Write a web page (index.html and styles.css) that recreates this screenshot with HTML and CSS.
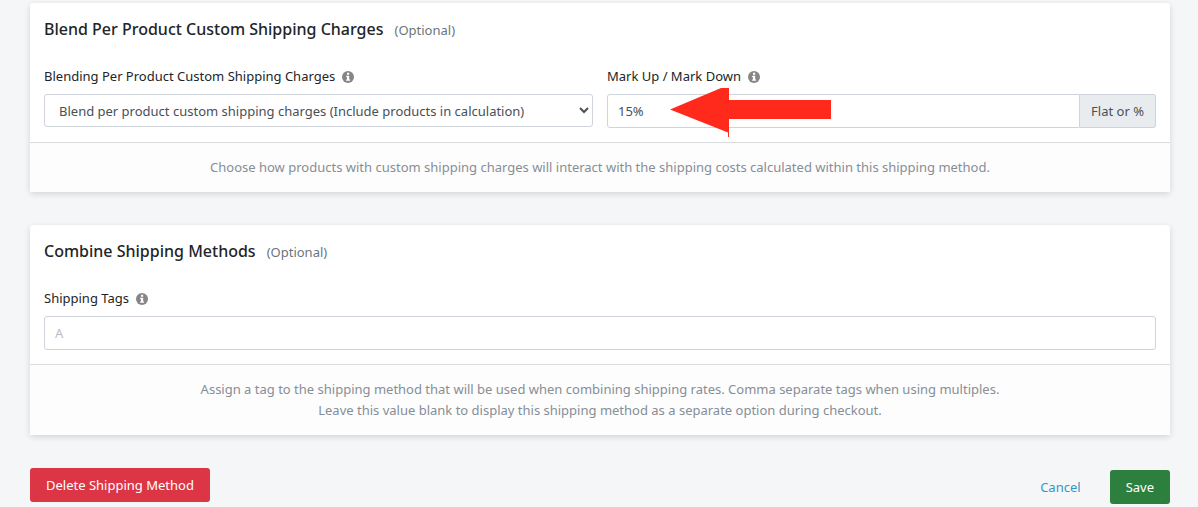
FILE: index.html
```html
<!DOCTYPE html>
<html lang="en">
<head>
<meta charset="utf-8">
<meta name="viewport" content="width=device-width, initial-scale=1">
<title>Shipping Method</title>
<link rel="stylesheet" href="styles.css">
</head>
<body>
<svg class="sprite" aria-hidden="true">
  <symbol id="info" viewBox="0 0 12 12">
    <circle cx="6" cy="6" r="6" fill="#868686"/>
    <path fill="#fff" d="M5 1.800h2.200v2H5zM4.200 4.800h3v3.600h.9v1.400H4.100V8.400H5V6.200h-.8z"/>
  </symbol>
</svg>
<form class="page">
  <section class="card">
    <div class="card-body">
      <h2 class="title">Blend Per Product Custom Shipping Charges <small class="optional">(Optional)</small></h2>
      <div class="fields">
        <div class="field">
          <label class="label" for="blend">Blending Per Product Custom Shipping Charges <svg class="info"><use href="#info"/></svg></label>
          <select class="control select" id="blend">
            <option>Blend per product custom shipping charges (Include products in calculation)</option>
          </select>
        </div>
        <div class="field">
          <label class="label" for="markup">Mark Up / Mark Down <svg class="info"><use href="#info"/></svg></label>
          <div class="group">
            <input class="control" id="markup" type="text" value="15%">
            <span class="addon">Flat or %</span>
            <svg class="arrow" viewBox="0 0 162 50" aria-hidden="true">
              <path fill="#ff2a1c" d="M0 21.500 51 0h8v12h102v19H59v18h-1v-4.500z"/>
            </svg>
          </div>
        </div>
      </div>
    </div>
    <p class="hint">Choose how products with custom shipping charges will interact with the shipping costs calculated within this shipping method.</p>
  </section>
  <section class="card">
    <div class="card-body">
      <h2 class="title">Combine Shipping Methods <small class="optional">(Optional)</small></h2>
      <div class="field">
        <label class="label" for="tags">Shipping Tags <svg class="info"><use href="#info"/></svg></label>
        <input class="control" id="tags" type="text" placeholder="A">
      </div>
    </div>
    <p class="hint">Assign a tag to the shipping method that will be used when combining shipping rates. Comma separate tags when using multiples.<br>Leave this value blank to display this shipping method as a separate option during checkout.</p>
  </section>
  <div class="actions">
    <button class="btn btn-danger" type="button">Delete Shipping Method</button>
    <div class="actions-end">
      <a class="cancel" href="#">Cancel</a>
      <button class="btn btn-save" type="submit">Save</button>
    </div>
  </div>
</form>
</body>
</html>
```
FILE: styles.css
```css
* {
  box-sizing: border-box;
}

body {
  margin: 0;
  background: #f4f6f8;
  color: #212529;
  font: 13px/21px "Noto Sans", "Open Sans", sans-serif;
}

.sprite {
  position: absolute;
  width: 0;
  height: 0;
}

.page {
  display: flex;
  flex-direction: column;
  gap: 33px;
  padding: 3px 28px 0 30px;
}

.card {
  background: #fff;
  border-radius: 3px;
  box-shadow: 0 2px 6px rgba(0, 0, 0, 0.14);
}

.card-body {
  padding: 14px;
}

.title {
  display: flex;
  align-items: baseline;
  gap: 11px;
  margin: 0 0 25px;
  font-size: 16px;
  font-weight: 500;
  line-height: 24px;
}

.optional {
  color: #6c757d;
  font-size: 13px;
  font-weight: 400;
  line-height: 16px;
}

.fields {
  display: grid;
  grid-template-columns: 1fr 1fr;
  gap: 14px;
}

.label {
  display: flex;
  align-items: center;
  gap: 7px;
  margin-bottom: 7px;
}

.info {
  width: 12px;
  height: 12px;
}

.control {
  display: block;
  width: 100%;
  height: 34px;
  padding: 0 10px;
  border: 1px solid #ced4da;
  border-radius: 3px;
  background: #fff;
  color: #495057;
  font: inherit;
}

.control::placeholder {
  color: #b8bcc0;
}

.select {
  height: 33px;
}

.group {
  position: relative;
  display: flex;
}

.group .control {
  flex: 1;
  border-radius: 3px 0 0 3px;
}

.addon {
  display: flex;
  align-items: center;
  padding: 0 11px;
  border: 1px solid #ced4da;
  border-left: 0;
  border-radius: 0 3px 3px 0;
  background: #e9ecef;
  color: #495057;
  white-space: nowrap;
}

.arrow {
  position: absolute;
  top: -6px;
  left: 63px;
  width: 162px;
  height: 50px;
  pointer-events: none;
}

.hint {
  margin: 0;
  padding: 14px;
  border-top: 1px solid #d9dbdd;
  background: #fdfdfd;
  color: #868e96;
  text-align: center;
}

.actions {
  display: flex;
  align-items: flex-start;
  justify-content: space-between;
}

.actions-end {
  display: flex;
  align-items: center;
  gap: 29px;
  padding-top: 2px;
}

.btn {
  height: 34px;
  padding: 0 16px;
  border: 0;
  border-radius: 3px;
  color: #fff;
  font: inherit;
}

.btn-danger {
  background: #dc3545;
}

.btn-save {
  background: #2d7f3e;
}

.cancel {
  color: #3498c6;
  text-decoration: none;
}
```
